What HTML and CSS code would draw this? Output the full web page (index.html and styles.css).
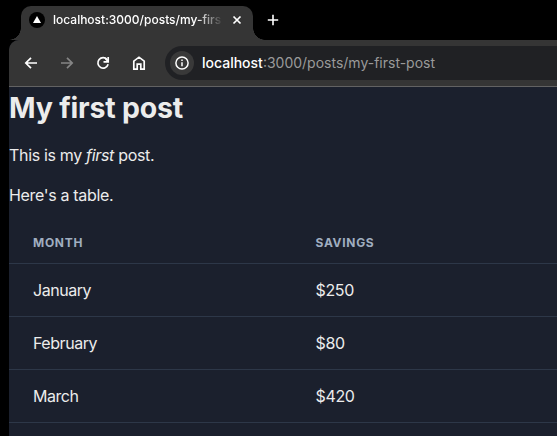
FILE: index.html
```html
<!DOCTYPE html>
<html lang="en">
<head>
<meta charset="utf-8">
<title>My first post</title>
<link rel="stylesheet" href="styles.css">
</head>
<body>
<header class="tabs">
  <div class="tab">
    <svg class="favicon" width="16" height="16" viewBox="0 0 16 16"><circle cx="8" cy="8" r="8" fill="#000"/><path d="M8 4l4 7H4z" fill="#fff"/></svg>
    <span class="tab-title">localhost:3000/posts/my-first-post</span>
    <svg class="close" width="10" height="10" viewBox="0 0 10 10"><path d="M1.5 1.5l7 7m0-7l-7 7"/></svg>
  </div>
  <svg class="plus" width="12" height="12" viewBox="0 0 12 12"><path d="M6 .8v10.4M.8 6h10.4"/></svg>
</header>
<div class="window">
  <nav class="toolbar">
    <svg class="icon" width="16" height="16" viewBox="0 0 16 16"><path d="M14 8H3M8 2.8L2.8 8 8 13.2"/></svg>
    <svg class="icon muted" width="16" height="16" viewBox="0 0 16 16"><path d="M2 8h11M8 2.8L13.2 8 8 13.2"/></svg>
    <svg class="icon" width="16" height="16" viewBox="0 0 16 16"><path d="M12.2 4.7A5.2 5.2 0 1 0 13.1 9.3"/><path d="M13.2 2v4.8H8.5M13.2 6.5L10.6 3.8"/></svg>
    <svg class="icon" width="16" height="16" viewBox="0 0 16 16"><path d="M2.8 6.2L8 2.2l5.2 4v7.9H9.8V9.2H6.2v4.9H2.8z"/></svg>
    <div class="address">
      <span class="info"><svg width="16" height="16" viewBox="0 0 16 16"><circle cx="8" cy="8" r="6.1"/><path d="M8 7.3v4M8 4.5v1.6"/></svg></span>
      <span class="url"><b class="host">localhost</b>:3000/posts/my-first-post</span>
    </div>
  </nav>
  <main class="post">
    <h1>My first post</h1>
    <p>This is my <em>first</em> post.</p>
    <p>Here's a table.</p>
    <table>
      <thead><tr><th class="month">Month</th><th>Savings</th></tr></thead>
      <tbody>
        <tr><td>January</td><td>$250</td></tr>
        <tr><td>February</td><td>$80</td></tr>
        <tr><td>March</td><td>$420</td></tr>
      </tbody>
    </table>
  </main>
</div>
</body>
</html>
```
FILE: styles.css
```css
* { box-sizing: border-box; }
body {
  margin: 0;
  height: 436px;
  overflow: hidden;
  background: #000;
  color: #ececec;
  font-family: Inter, sans-serif;
}
svg { flex: none; fill: none; stroke: #fff; stroke-width: 1.7; }
.tabs { display: flex; align-items: flex-start; height: 40px; padding: 6px 0 0 21px; }
.tab {
  position: relative;
  display: flex;
  align-items: center;
  width: 232px;
  height: 34px;
  padding: 0 11px 6px 8px;
  border-radius: 10px 10px 0 0;
  background: #353535;
}
.tab::before, .tab::after {
  content: "";
  position: absolute;
  bottom: 0;
  width: 12px;
  height: 12px;
}
.tab::before { left: -12px; background: radial-gradient(circle at 0 0, transparent 11.5px, #353535 12px); }
.tab::after { right: -12px; background: radial-gradient(circle at 100% 0, transparent 11.5px, #353535 12px); }
.favicon { stroke: none; }
.tab-title {
  width: 168px;
  margin-left: 8px;
  overflow: hidden;
  white-space: nowrap;
  color: #fff;
  font-size: 12px;
  line-height: 18px;
  font-weight: 500;
  -webkit-mask-image: linear-gradient(to right, #000 144px, transparent 170px);
  mask-image: linear-gradient(to right, #000 144px, transparent 170px);
}
.close { margin-left: 11px; }
.plus { margin: 8px 0 0 14px; stroke-width: 1.6; }
.window {
  height: 396px;
  margin-left: 9px;
  overflow: hidden;
  border-top-left-radius: 10px;
  background: #1b202d;
}
.toolbar {
  display: flex;
  align-items: center;
  gap: 20px;
  height: 47px;
  padding-left: 14px;
  border-bottom: 1px solid #626262;
  background: #353535;
}
.muted { stroke: #858585; }
.address {
  display: flex;
  flex: 1;
  align-items: center;
  height: 34px;
  margin-left: -2px;
  padding-left: 5px;
  border-radius: 17px 0 0 17px;
  background: #202124;
}
.info {
  display: flex;
  align-items: center;
  justify-content: center;
  width: 24px;
  height: 24px;
  border-radius: 50%;
  background: #393939;
}
.info svg { stroke-width: 1.5; }
.url { margin: 0 0 2px 8px; color: #9a9a9a; font-size: 14px; white-space: nowrap; }
.host { color: #fff; font-weight: 500; }
h1 { margin: 0; padding-top: 1px; font-size: 28.5px; line-height: 40px; font-weight: 700; letter-spacing: -0.2px; }
p { margin: 0; font-size: 16px; line-height: 24px; letter-spacing: -0.33px; }
h1 + p { margin-top: 15px; }
p + p { margin-top: 16px; }
table { width: 569px; margin-top: 16px; border-collapse: separate; border-spacing: 0; table-layout: fixed; }
th, td { padding: 0 24px; border-bottom: 1px solid #2d3748; text-align: left; }
th { height: 41px; padding-bottom: 1px; color: #a0aec0; font-size: 12px; font-weight: 700; letter-spacing: 0.7px; text-transform: uppercase; }
td { height: 53px; font-size: 16px; letter-spacing: -0.45px; }
td + td { letter-spacing: -0.35px; }
.month { width: 282.5px; }
```
